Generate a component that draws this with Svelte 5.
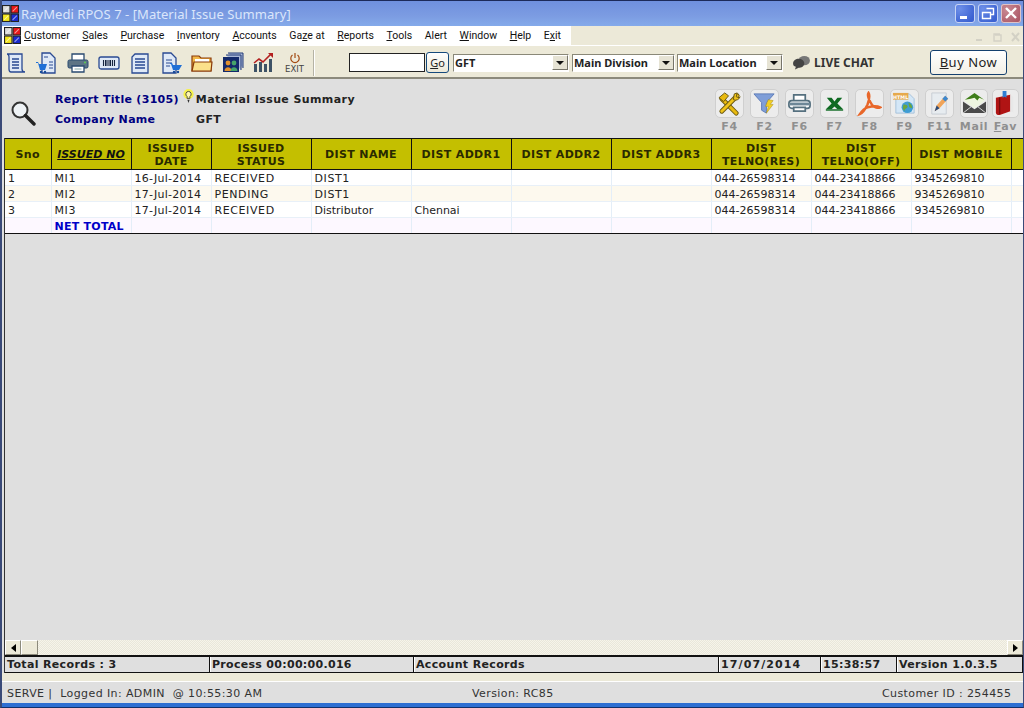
<script>
  const menu = [['','C','ustomer'],['','S','ales'],['','P','urchase'],['','I','nventory'],['','A','ccounts'],['Ga','z','e at'],['','R','eports'],['','T','ools'],['Alert','',''],['','W','indow'],['','H','elp'],['E','x','it']];
  const cols = [46,80,80,100,100,100,100,100,100,100,100,12];
  const heads = [['Sno'],['ISSUED NO'],['ISSUED','DATE'],['ISSUED','STATUS'],['DIST NAME'],['DIST ADDR1'],['DIST ADDR2'],['DIST ADDR3'],['DIST','TELNO(RES)'],['DIST','TELNO(OFF)'],['DIST MOBILE'],[]];
  const rows = [
    ['1','MI1','16-Jul-2014','RECEIVED','DIST1','','','','044-26598314','044-23418866','9345269810',''],
    ['2','MI2','17-Jul-2014','PENDING','DIST1','','','','044-26598314','044-23418866','9345269810',''],
    ['3','MI3','17-Jul-2014','RECEIVED','Distributor','Chennai','','','044-26598314','044-23418866','9345269810','']
  ];
  const kind = (c) => (/^[A-Z]+\d*$/.test(c) ? 'caps-cell' : /Jul/.test(c) ? 'date-cell' : '');
</script>

{#snippet logo()}
  <svg class="logo" viewBox="0 0 16 16" width="17" height="17">
    <rect x="0.5" y="0.5" width="7" height="7" fill="#dcdcdc" stroke="#222"/>
    <rect x="8.5" y="0.5" width="7" height="7" fill="#e81818" stroke="#222"/>
    <rect x="0.5" y="8.5" width="7" height="7" fill="#f4e61c" stroke="#222"/>
    <rect x="8.5" y="8.5" width="7" height="7" fill="#1a2ad0" stroke="#222"/>
    <path d="M2 6 6 2M10 6 14 2M2 14 6 10M10 14 14 10" stroke="#fff" stroke-opacity=".55"/>
  </svg>
{/snippet}

<div class="win">
  <header class="title">
    {@render logo()}
    <span class="title-text">RayMedi RPOS 7 - [Material Issue Summary]</span>
    <div class="caps">
      <span class="cap"><svg viewBox="0 0 20 19" width="20" height="19"><rect x="5" y="12" width="7" height="3" fill="#fff"/></svg></span>
      <span class="cap"><svg viewBox="0 0 20 19" width="20" height="19"><path d="M8.5 4.5h7v6h-3M4.5 8.5h8v6h-8z" fill="none" stroke="#fff" stroke-width="1.4"/></svg></span>
      <span class="cap close"><svg viewBox="0 0 20 19" width="20" height="19"><path d="M5 4l10 10M15 4 5 14" stroke="#fff" stroke-width="2.4"/></svg></span>
    </div>
  </header>

  <nav class="menubar">
    <div class="menu">
      {@render logo()}
      <div class="items">
        {#each menu as m}<span class="mi">{m[0]}<u>{m[1]}</u>{m[2]}</span>{/each}
      </div>
    </div>
    <div class="mdi">
      <svg viewBox="0 0 46 12" width="46" height="12"><path d="M1 9h6" stroke="#d3d1c5" stroke-width="2"/><path d="M20 4h6v6h-7V3h6" fill="none" stroke="#d3d1c5" stroke-width="1.4"/><path d="M37 2l7 8M44 2l-7 8" stroke="#d3d1c5" stroke-width="2"/></svg>
    </div>
  </nav>

  <div class="toolbar">
    <div class="tools">
      <span class="slot"><svg viewBox="0 0 22 22" width="22" height="22"><path d="M2 2h15v15c0 2 1 3 3 3H6c-2 0-2-2-2-3V5C4 3 3 2 2 2z" fill="#dfe9f7" stroke="#2a4a92" stroke-width="1.3"/><path d="M7 7h7M7 10h7M7 13h7M7 16h7" stroke="#2a4a92" stroke-width="1.4"/></svg></span>
      <span class="slot"><svg viewBox="0 0 22 22" width="22" height="22"><path d="M6 1h8l5 5v15H6z" fill="#dfe9f7" stroke="#2a4a92" stroke-width="1.3"/><path d="M13 10h4M13 13h4M13 16h4M8 5h4" stroke="#2a4a92"/><path d="M0 10h2l1 2h8l-2 6H4L2 11H0z" fill="#1f6fd6"/><circle cx="5" cy="20" r="1.2" fill="#164a9a"/><circle cx="9" cy="20" r="1.2" fill="#164a9a"/></svg></span>
      <span class="slot"><svg viewBox="0 0 22 22" width="22" height="22"><path d="M5 8V2h12v6" fill="#fff" stroke="#2a4a70" stroke-width="1.3"/><rect x="1" y="8" width="20" height="8" rx="1.5" fill="#5d7485" stroke="#2a4a70"/><circle cx="18" cy="10.5" r="1" fill="#5fcf50"/><path d="M5 14h12v6H5z" fill="#fff" stroke="#2a4a70" stroke-width="1.3"/><path d="M7.500 17h7" stroke="#8aa"/></svg></span>
      <span class="slot"><svg viewBox="0 0 22 22" width="22" height="22"><rect x="1" y="5" width="20" height="12" rx="2" fill="#dfe9f7" stroke="#2a4a92" stroke-width="1.3"/><path d="M5.500 8v6M7.500 8v6M9 8v6M11 8v6M12.500 8v6M14.500 8v6M16.500 8v6" stroke="#16243f" stroke-width="1.1"/></svg></span>
      <span class="slot"><svg viewBox="0 0 22 22" width="22" height="22"><path d="M6 2h13v19H3V5z" fill="#dfe9f7" stroke="#2a4a92" stroke-width="1.3"/><path d="M6 7h10M6 10h10M6 13h10M6 16h10" stroke="#2a4a92" stroke-width="1.4"/></svg></span>
      <span class="slot"><svg viewBox="0 0 22 22" width="22" height="22"><path d="M3 1h8l5 5v15H3z" fill="#dfe9f7" stroke="#2a4a92" stroke-width="1.3"/><path d="M6 8h6M6 11h6M6 14h4" stroke="#2a4a92"/><path d="M10 11h2l1 2h9l-3 5h-6l-2-6h-1z" fill="#1f6fd6"/><circle cx="14" cy="20" r="1.2" fill="#164a9a"/><circle cx="18" cy="20" r="1.2" fill="#164a9a"/></svg></span>
      <span class="slot"><svg viewBox="0 0 22 22" width="22" height="22"><path d="M1 4h7l2 2h10v13H1z" fill="#f2b94a" stroke="#8a3a08" stroke-width="1.2"/><path d="M4 7h14v4H4z" fill="#fff"/><path d="M1 19l2-9h18l-1 9z" fill="#fbe08a" stroke="#8a3a08" stroke-width="1.2"/></svg></span>
      <span class="slot"><svg viewBox="0 0 22 22" width="22" height="22"><path d="M6 1h15v15M4 3h15v15" fill="#a9b7d6" stroke="#233a78"/><rect x="1" y="5" width="16" height="15" fill="#13296b"/><circle cx="6" cy="11" r="2.400" fill="#e0912e"/><path d="M2.500 19c0-5 7-5 7 0z" fill="#e0912e"/><circle cx="12" cy="11" r="2.400" fill="#46a56a"/><path d="M8.500 19c0-5 7-5 7 0z" fill="#46a56a"/></svg></span>
      <span class="slot"><svg viewBox="0 0 22 22" width="22" height="22"><path d="M1 12h3v8H1zM6 10h3v10H6zM11 12h3v8h-3zM16 7h3v13h-3z" fill="#3d5266"/><path d="M1 11l5-4 4 3 8-8" fill="none" stroke="#b32020" stroke-width="1.6"/><path d="M15 1h5v5z" fill="#b32020"/></svg></span>
      <span class="slot exit"><svg viewBox="0 0 12 12" width="12" height="12"><path d="M3.500 3a4.200 4.200 0 1 0 5 0M6 1v5" fill="none" stroke="#a34a12" stroke-width="1.2"/></svg><small>EXIT</small></span>
    </div>
    <span class="sep"></span>
    <span class="input"></span>
    <span class="go"><u>G</u>o</span>
    <div class="select s1"><span>GFT</span><i></i></div>
    <div class="select s2"><span>Main Division</span><i></i></div>
    <div class="select s3"><span>Main Location</span><i></i></div>
    <div class="chat">
      <svg viewBox="0 0 20 16" width="19" height="15"><ellipse cx="13" cy="6" rx="6" ry="5" fill="#777"/><path d="M1 9c0-3 3-5 6-5s6 2 6 5-3 4.500-6 4.500l-4 2 1-3C2 12 1 11 1 9z" fill="#444"/></svg>
      <b>LIVE CHAT</b>
    </div>
    <span class="buy"><u>B</u>uy Now</span>
  </div>

  <main class="content">
    <section class="report">
      <svg class="glass" viewBox="0 0 26 26" width="26" height="26"><circle cx="10" cy="10" r="7.500" fill="#eef2f5" stroke="#333" stroke-width="2"/><path d="M15.500 15.500 24 24" stroke="#222" stroke-width="3.400" stroke-linecap="round"/></svg>
      <div class="meta">
        <div class="line"><span class="k">Report Title (3105)</span><svg class="bulb" viewBox="0 0 14 16" width="13" height="15"><circle cx="7" cy="5.500" r="5.500" fill="#f7f24a"/><path d="M7 2.500a3 3 0 0 0-1.500 5.500v2h3V8A3 3 0 0 0 7 2.500z" fill="#fff8b0" stroke="#333" stroke-width=".9"/><path d="M5.800 11.500h2.400L7 15z" fill="#333"/></svg><span class="v">Material Issue Summary</span></div>
        <div class="line l2"><span class="k">Company Name</span><span class="v gft">GFT</span></div>
      </div>
      <div class="actions">
        <div class="act"><span class="tile"><svg viewBox="0 0 26 26" width="25" height="25"><path d="M5 8 20 23" stroke="#6b5a12" stroke-width="5" stroke-linecap="round"/><path d="M5 8 20 23" stroke="#e8b90e" stroke-width="3" stroke-linecap="round"/><path d="M2 7 8 2l4 3-5 6z" fill="#e8b90e" stroke="#6b5a12"/><path d="M21 5 5 21" stroke="#6b5a12" stroke-width="5" stroke-linecap="round"/><path d="M21 5 5 21" stroke="#f0c41a" stroke-width="3" stroke-linecap="round"/><path d="M24 6a5 5 0 0 1-7 3l1-6 3-1-1 4 3 1z" fill="#f0c41a" stroke="#6b5a12"/></svg></span><em>F4</em></div>
        <div class="act"><span class="tile"><svg viewBox="0 0 26 26" width="25" height="25"><path d="M2 3h21l-8 9v11l-5-3v-8z" fill="#7f9ed8" stroke="#5e7cb8"/><path d="M17 9l5 1-3 4 3 0-7 9 2-7h-3z" fill="#f2cf24" stroke="#a78a10" stroke-width=".5"/></svg></span><em>F2</em></div>
        <div class="act"><span class="tile"><svg viewBox="0 0 26 26" width="25" height="25"><path d="M7 10V4h12v6" fill="#fff" stroke="#55707f" stroke-width="1.800"/><rect x="2" y="10" width="22" height="8" rx="3" fill="#fff" stroke="#55707f" stroke-width="1.800"/><rect x="3" y="12" width="20" height="3" fill="#6d8797"/><path d="M7 17h12v4H7z" fill="#fff" stroke="#55707f" stroke-width="1.800"/></svg></span><em>F6</em></div>
        <div class="act"><span class="tile"><svg viewBox="0 0 26 26" width="25" height="25"><path d="M5 7h5l3 4 3-4h5l-5 6 6 6h-6l-3-3-3 3H4l6-6z" fill="#0f6a22"/><path d="M4 19h18v1.500H4z" fill="#0f6a22"/></svg></span><em>F7</em></div>
        <div class="act"><span class="tile"><svg viewBox="0 0 26 26" width="25" height="25"><path d="M12 2c-2 3 2 10 4 13 2 2 6 3 8 2-4-2-9-1-13 0-3 1-6 4-8 7 3-1 6-6 8-10 1-3 3-9 1-12z" fill="none" stroke="#e8672a" stroke-width="2.600"/></svg></span><em>F8</em></div>
        <div class="act"><span class="tile"><svg viewBox="0 0 26 26" width="25" height="25"><path d="M4 3h14l5 5v15H4z" fill="#d4e7f7" stroke="#a6c2db"/><rect x="1" y="2" width="16" height="7" fill="#e6a94c"/><text x="9" y="8" class="ht">HTML</text><circle cx="16" cy="17" r="6" fill="#3f9dd4"/><path d="M12 14c3 0 5 1 4 3s-3 1-3 4c-2-2-2-4-1-7zM17 12c3 1 4 3 4 6l-3-1z" fill="#6aa641"/></svg></span><em>F9</em></div>
        <div class="act"><span class="tile"><svg viewBox="0 0 26 26" width="25" height="25"><path d="M5 2h15v22H5z" fill="#e7ecf0" stroke="#c7cdd4"/><path d="M8 21l2-6 9-10 3 3-9 10z" fill="#f0a45a"/><path d="M16 8l3-3 3 3-3 3z" fill="#3c88d0"/><path d="M8 21l2-6 3 3z" fill="#2b4a78"/></svg></span><em>F11</em></div>
        <div class="act mail"><span class="tile"><svg viewBox="0 0 26 26" width="25" height="25"><path d="M2 10 13 2l11 8-11 8z" fill="#eef5e0"/><path d="M3 9 13 2l10 7-5-2-2 3-3-3-4 1z" fill="#3e7d1a"/><path d="M1 11l12 8 12-8v12H1z" fill="#4a4a4a"/><path d="M1 23l9-7M25 23l-9-7" stroke="#ddd"/></svg></span><em>Mail</em></div>
        <div class="act fav"><span class="tile"><svg viewBox="0 0 26 26" width="25" height="25"><path d="M3 7l15-3v17L7 25c-3 0-4-1-4-3z" fill="#b01414"/><path d="M18 4l3 2v16l-3-1z" fill="#e8e8e8"/><path d="M7 7v17" stroke="#6a0808"/><path d="M10 0h4v7l-2-1-2 1z" fill="#2f7fd6"/></svg></span><em><u>F</u>av</em></div>
      </div>
    </section>

    <section class="grid">
      <div class="sheet">
        <table>
          <colgroup>{#each cols as w}<col style="width:{w}px" />{/each}</colgroup>
          <thead>
            <tr>
              {#each heads as h, i}
                <th class:sorted={i === 1}>{#each h as t, j}{#if j}<br />{/if}{t}{/each}</th>
              {/each}
            </tr>
          </thead>
          <tbody>
            {#each rows as r, i}
              <tr class:alt={i === 1}>{#each r as c}<td class={kind(c)}>{c}</td>{/each}</tr>
            {/each}
            <tr class="total">
              {#each cols as _, i}<td>{i === 1 ? 'NET TOTAL' : ''}</td>{/each}
            </tr>
          </tbody>
        </table>
      </div>
      <div class="scroll">
        <span class="btn"><svg viewBox="0 0 5 8" width="5" height="8"><path d="M5 0v8L0 4z" fill="#000"/></svg></span>
        <span class="thumb"></span>
        <span class="track"></span>
        <span class="btn right"><svg viewBox="0 0 5 8" width="5" height="8"><path d="M0 0v8l5-4z" fill="#000"/></svg></span>
      </div>
      <div class="status">
        <span class="c a">Total Records : 3</span>
        <span class="c b">Process 00:00:00.016</span>
        <span class="c d">Account Records</span>
        <span class="c e">17/07/2014</span>
        <span class="c f">15:38:57</span>
        <span class="c g">Version 1.0.3.5</span>
      </div>
    </section>
  </main>

  <div class="strip"></div>
  <footer class="foot">
    <span class="f1">SERVE |&nbsp; Logged In: ADMIN&nbsp; @ 10:55:30 AM</span>
    <span class="f2">Version: RC85</span>
    <span class="f3">Customer ID : 254455</span>
  </footer>
</div>

<style>
  :global(body) { margin: 0; background: #dfdfdf; }
  .win {
    width: 1024px; height: 708px; box-sizing: border-box; overflow: hidden;
    display: flex; flex-direction: column; background: #dfdfdf;
    border-left: 2px solid #3a4a78; border-right: 1px solid #3a4a78;
    border-bottom: 1px solid #12306a;
    font: 11px "DejaVu Sans", Verdana, sans-serif; color: #222;
  }
  .title {
    height: 26px; flex: none; display: flex; align-items: center; box-sizing: border-box;
    border-top: 1px solid #1c2a5a;
    background: linear-gradient(#6f90de, #7c9ce2 60%, #84aaea);
    margin-left: -2px; margin-right: -1px;
  }
  .title .logo { margin-left: 2px; }
  .title-text {
    margin-left: 2px; color: #dbe6fb; font: 13px "Noto Sans", "Open Sans", sans-serif;
    letter-spacing: .05px; flex: 1;
  }
  .caps { display: flex; gap: 3px; margin-right: 3px; }
  .cap {
    width: 20px; height: 19px; display: block; border-radius: 3px; border: 0;
    background: radial-gradient(circle at 25% 25%, #6d8fe8, #3c62d2 75%);
    box-shadow: inset 0 0 0 1px #c6d4f4;
  }
  .cap svg { display: block; }
  .close { background: radial-gradient(circle at 30% 30%, #c98a94, #ad5a68 80%); box-shadow: inset 0 0 0 1px #dec4c8; }
  .menubar {
    height: 19px; flex: none; display: flex; justify-content: space-between; align-items: center;
    background: #ece9d8; border-bottom: 1px solid #fff; box-sizing: content-box;
  }
  .menu { width: 569px; height: 19px; background: #fff; display: flex; align-items: center; padding-left: 2px; box-sizing: border-box; }
  .menu .logo { flex: none; }
  .items { display: flex; margin-left: -3.300px; }
  .mi { padding: 0 6.300px; font: 10.500px Roboto, "Noto Sans", sans-serif; color: #111; white-space: nowrap; }
  .mdi { margin-right: 2px; height: 12px; margin-top: 3px; }
  .mdi svg { display: block; }
  .toolbar {
    height: 29px; padding-top: 2px; flex: none; display: flex; align-items: center; background: #ece9d8;
    border-bottom: 2px solid #8c8a7c; box-sizing: content-box;
  }
  .tools { display: flex; margin-left: -2px; width: 310px; flex: none; }
  .slot { width: 31px; height: 24px; display: flex; align-items: center; justify-content: center; flex: none; }
  .slot svg { display: block; }
  .exit { flex-direction: column; }
  .exit small { font: 8.500px "DejaVu Sans", sans-serif; color: #444; line-height: 10px; }
  .sep { width: 1px; height: 26px; background: #b5b3a5; box-shadow: 1px 0 #fff; margin: 0 35px 0 3px; flex: none; }
  .input { width: 74px; height: 17px; background: #fff; border: 1px solid #222; flex: none; }
  .go {
    width: 21px; height: 19px; margin-left: 1px; border: 1px solid #164a7c; border-radius: 3px; flex: none;
    background: linear-gradient(#fff, #ece9d8); font: 11px "Noto Sans", sans-serif; text-align: center; line-height: 19px;
  }
  .select {
    height: 18px; display: flex; align-items: center; background: #fff; flex: none; box-sizing: border-box;
    border: 1px solid #8a8878; border-right-color: #fff; border-bottom-color: #fff;
    font: bold 11px "Noto Sans", sans-serif; color: #222; padding-left: 1px; justify-content: space-between;
  }
  .select i {
    width: 16px; height: 15px; background: #e6e3d4; border: 1px solid; border-color: #fff #77756a #77756a #fff;
    box-sizing: border-box; display: flex; align-items: center; justify-content: center; font-style: normal;
  }
  .select i::before { content: ""; border: 4px solid transparent; border-top: 4px solid #111; border-bottom: 0; }
  .select span { white-space: nowrap; }
  .s1 { width: 116px; margin-left: 4px; }
  .s2 { width: 103px; margin-left: 3px; }
  .s3 { width: 106px; margin-left: 2px; }
  .chat { display: flex; align-items: center; gap: 3px; margin-left: 9px; width: 138px; flex: none; }
  .chat b { font-size: 12px; color: #333; font-family: "Noto Sans", sans-serif; }
  .buy {
    width: 75px; height: 23px; border: 1px solid #14406e; border-radius: 3px; text-align: center;
    background: linear-gradient(#fff, #f2f0e6); font: 13px/23px "Noto Sans", sans-serif; letter-spacing: .5px; color: #222; flex: none;
  }
  .content { flex: 1; display: flex; flex-direction: column; min-height: 0; background: #dfdfdf; }
  .report { height: 59px; flex: none; display: flex; align-items: flex-start; }
  .glass { margin: 21px 0 0 8px; flex: none; }
  .meta { margin: 10px 0 0 19px; flex: none; width: 500px; }
  .line { height: 20px; display: flex; align-items: center; font-weight: bold; letter-spacing: .3px; }
  .k { color: #000080; }
  .v { color: #222; letter-spacing: .4px; }
  .bulb { margin: -6px 1px 0 3px; flex: none; }
  .l2 .k { width: 141px; }
  .actions { margin: 10px 0 0 160px; display: flex; gap: 6px; flex: none; }
  .act { display: flex; flex-direction: column; align-items: center; width: 29px; }
  .tile {
    width: 29px; height: 29px; box-sizing: border-box; border: 1px solid #cfcfcf; border-radius: 5px;
    background: #ececec; display: flex; align-items: center; justify-content: center;
  }
  .tile svg { display: block; }
  .ht { font: bold 5px "DejaVu Sans", sans-serif; fill: #fff; text-anchor: middle; }
  .act em { font-style: normal; font-weight: bold; color: #8f8f8f; line-height: 14px; margin-top: 2px; letter-spacing: .6px; white-space: nowrap; }
  .mail { width: 28px; }
  .mail .tile { width: 28px; }
  .fav { width: 27px; margin-left: -2px; }
  .fav .tile { width: 27px; }
  .grid { flex: 1; display: flex; flex-direction: column; min-height: 0; margin-left: 2px; border-left: 1px solid #333; }
  .sheet { flex: 1; min-height: 0; }
  table { table-layout: fixed; border-collapse: collapse; width: 1018px; }
  th {
    height: 31px; padding: 1px 0 0; background: #c4bf00; border: 1px solid #111; border-left: 0;
    color: #2a2a00; font-size: 11px; line-height: 13px; letter-spacing: .35px; box-sizing: border-box; font-weight: bold;
  }
  th.sorted { font-style: italic; text-decoration: underline; letter-spacing: 0; color: #111; }
  td {
    height: 16px; padding: 3px 3px 0; border-right: 1px solid #e4eef8; border-bottom: 1px solid #e8f0f8;
    background: #fff; white-space: nowrap; overflow: hidden; box-sizing: border-box; font-size: 11px; line-height: 12px; color: #222;
  }
  td.caps-cell { letter-spacing: .6px; }
  td.date-cell { letter-spacing: .27px; }
  .alt td { background: #fdf9ee; }
  .total td { background: #fdf8ff; color: #0000c8; font-weight: bold; border-bottom: 1px solid #111; height: 16px; letter-spacing: .25px; }
  .scroll {
    height: 15px; width: 1018px; flex: none; display: flex; align-items: stretch;
    background: repeating-conic-gradient(#f6f4ea 0 25%, #e9e7da 0 50%) 0 0 / 2px 2px;
  }
  .btn, .thumb {
    box-sizing: border-box; background: #ece9d8; flex: none; display: flex; align-items: center; justify-content: center;
    border: 1px solid; border-color: #fff #8c8a7c #8c8a7c #fff;
  }
  .btn { width: 16px; }
  .thumb { width: 17px; }
  .track { flex: 1; }
  .status {
    height: 18px; width: 1018px; flex: none; display: flex; box-sizing: border-box;
    border-top: 2px solid #111; border-bottom: 1px solid #111; border-right: 1px solid #111;
    font-weight: bold; letter-spacing: .35px; font-size: 11px; color: #222; line-height: 14px;
  }
  .c { box-sizing: border-box; padding: 1px 0 0 2px; border-right: 1px solid #111; box-shadow: 1px 0 #fff; white-space: nowrap; overflow: hidden; flex: none; }
  .a { width: 205px; }
  .b { width: 204px; letter-spacing: .3px; }
  .d { width: 305px; }
  .e { width: 102px; letter-spacing: 1.1px; }
  .f { width: 76px; }
  .g { flex: 1; border-right: 0; box-shadow: none; }
  .strip { height: 8px; flex: none; background: #ece9d8; }
  .foot {
    height: 26px; flex: none; box-sizing: border-box; border-top: 1px solid #fff; background: #dfdfdf; letter-spacing: .4px;
    display: flex; align-items: center; border-bottom: 4px solid #2d6ed2; margin: 0 -1px 0 -2px; padding: 1px 0 0 7px; color: #333; white-space: nowrap;
  }
  .f1 { width: 465px; flex: none; }
  .f2 { width: 410px; flex: none; }
  .f3 { flex: none; }
</style>
